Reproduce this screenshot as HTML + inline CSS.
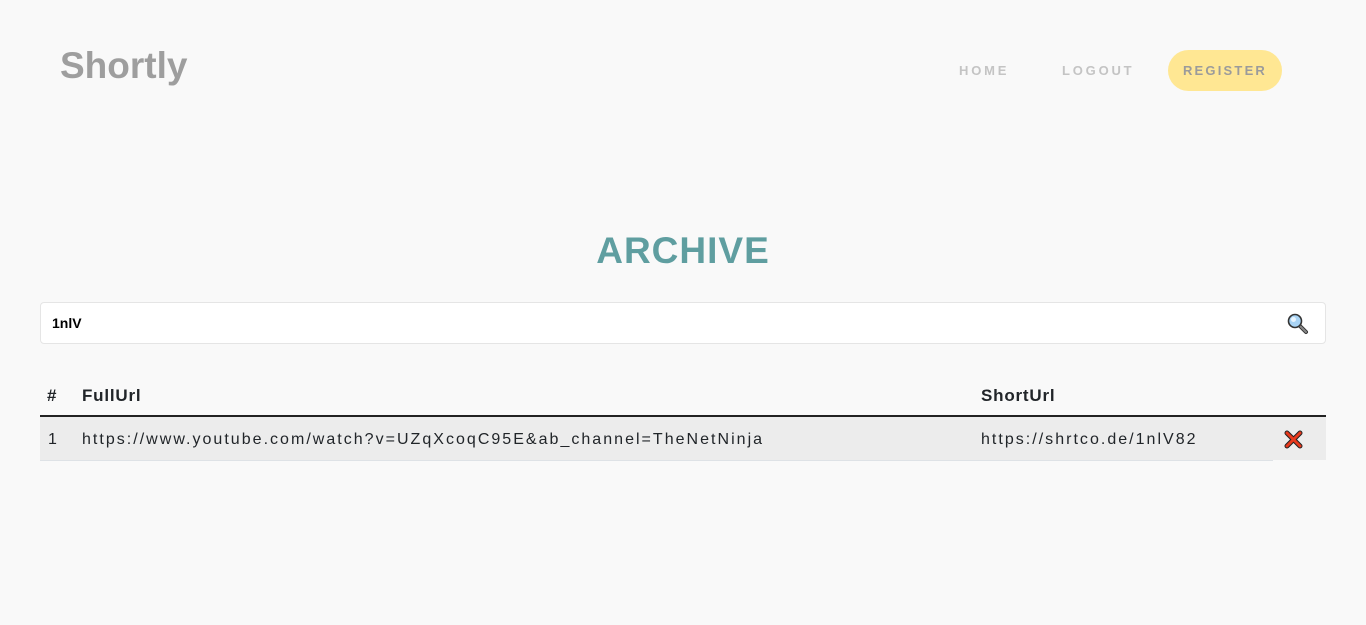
<!DOCTYPE html>
<html><head><meta charset="utf-8"><style>
*{margin:0;padding:0;box-sizing:border-box}
body{width:1366px;height:625px;background:#f9f9f9;font-family:"Liberation Sans","DejaVu Sans",sans-serif;position:relative;overflow:hidden}
.logo{position:absolute;left:60px;top:45px;font-size:37px;color:#9e9e9e;font-weight:bold;letter-spacing:0px}
.nav{position:absolute;top:63px;font-size:13px;font-weight:bold;letter-spacing:2.8px;color:#c4c4c4}
.reg{position:absolute;left:1168px;top:50px;width:114px;height:41px;border-radius:21px;background:#ffe793;color:#9b9b9b;font-size:13px;font-weight:bold;letter-spacing:2.2px;text-align:center;line-height:41px}
h1{position:absolute;left:0;width:1366px;top:230px;text-align:center;font-size:37px;color:#5f9ea0;letter-spacing:1px;font-weight:900}
.search{position:absolute;left:40px;top:302px;width:1286px;height:42px;background:#fff;border:1px solid #e5e5e5;border-radius:4px}
.search span{position:absolute;left:11px;top:12px;font-size:14px;font-weight:bold;color:#000}
.th{position:absolute;top:386px;font-size:17px;font-weight:bold;color:#212529;letter-spacing:0.8px}
.hline{position:absolute;left:40px;top:415px;width:1286px;height:2px;background:#222}
.row{position:absolute;left:40px;top:417px;width:1286px;height:43px;background:#ececec}
.bl{position:absolute;left:40px;top:460px;width:1233px;height:1px;background:#dee2e6}
.td{position:absolute;top:431px;font-size:16px;color:#212529;letter-spacing:2.02px}
</style></head><body>
<div class="logo">Shortly</div>
<div class="nav" style="left:959px">HOME</div>
<div class="nav" style="left:1062px">LOGOUT</div>
<div class="reg">REGISTER</div>
<h1>ARCHIVE</h1>
<div class="search"><span>1nlV</span>
<svg style="position:absolute;left:1245px;top:9px" width="24" height="24" viewBox="0 0 24 24"><line x1="13" y1="13" x2="20" y2="20" stroke="#333" stroke-width="4" stroke-linecap="round"/><line x1="13" y1="13" x2="20" y2="20" stroke="#888" stroke-width="2" stroke-linecap="round"/><circle cx="9" cy="9" r="6.5" fill="#a9d4f5" stroke="#333" stroke-width="1.6"/><circle cx="7.5" cy="7.5" r="2.5" fill="#e8f5ff"/></svg>
</div>
<div class="th" style="left:47px">#</div>
<div class="th" style="left:82px">FullUrl</div>
<div class="th" style="left:981px">ShortUrl</div>
<div class="hline"></div>
<div class="row"></div>
<div class="bl"></div>
<div class="td" style="left:48px">1</div>
<div class="td" style="left:82px">https://www.youtube.com/watch?v=UZqXcoqC95E&amp;ab_channel=TheNetNinja</div>
<div class="td" style="left:981px">https://shrtco.de/1nlV82</div>
<svg style="position:absolute;left:1284px;top:430px" width="19" height="19" viewBox="0 0 19 19"><path d="M3 3L16 16M16 3L3 16" stroke="#222" stroke-width="5" stroke-linecap="round"/><path d="M3 3L16 16M16 3L3 16" stroke="#e8391d" stroke-width="3" stroke-linecap="round"/></svg>
</body></html>
